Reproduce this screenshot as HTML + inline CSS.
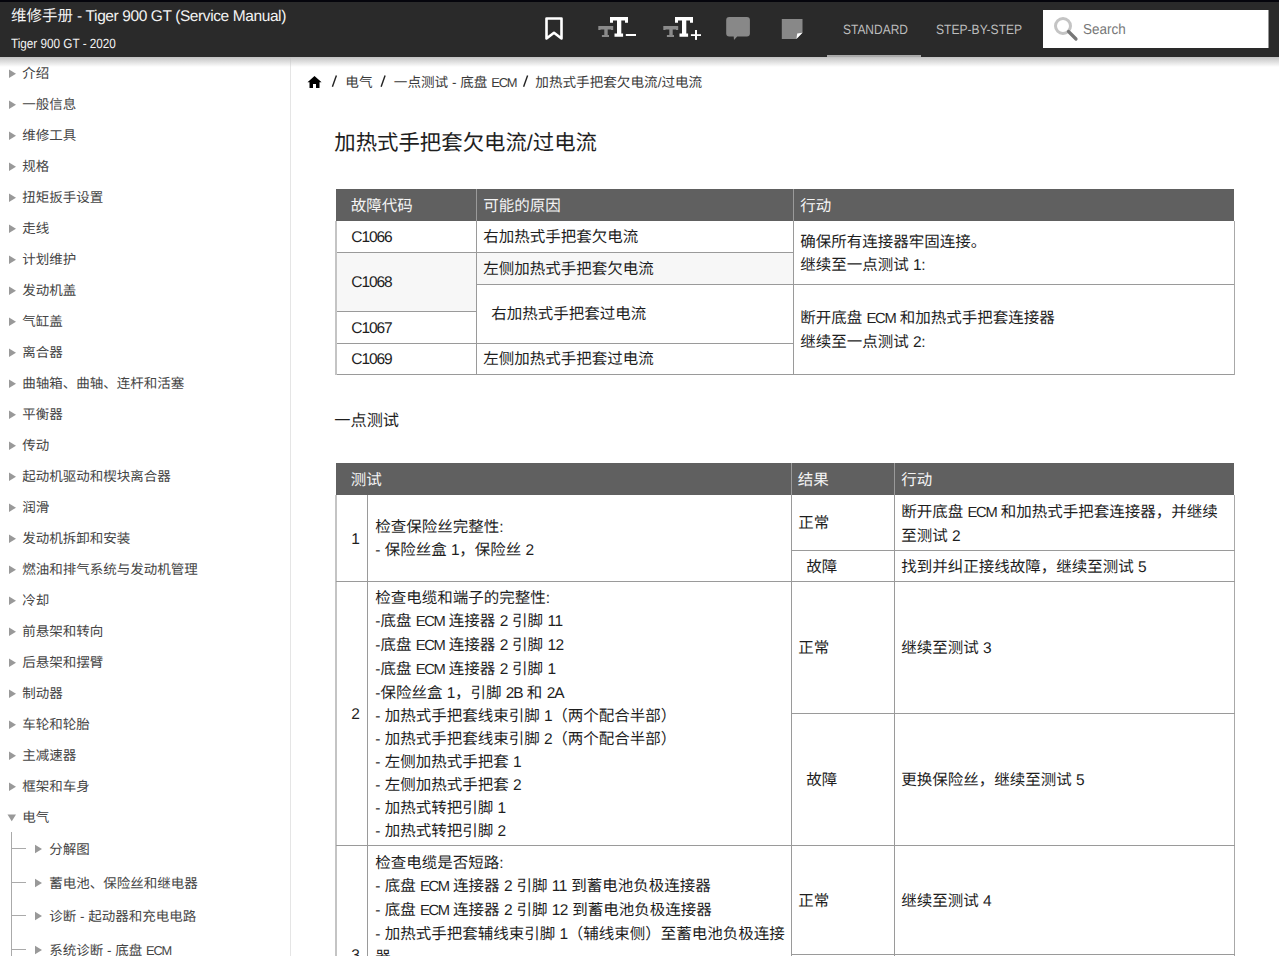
<!DOCTYPE html>
<html lang="zh-CN"><head><meta charset="utf-8">
<style>
*{margin:0;padding:0;box-sizing:border-box}
html,body{width:1279px;height:956px;overflow:hidden;background:#fff}
body{font-family:"Liberation Sans",sans-serif;color:#222;position:relative;text-rendering:geometricPrecision}
.t{position:absolute;white-space:nowrap}
.ov{position:absolute;left:0;top:0}
.la{font-size:0.95em;letter-spacing:-0.09em}
.di{letter-spacing:-0.03em}
.ld{letter-spacing:-0.07em}
#hdr{position:absolute;left:0;top:0;width:1279px;height:57px;background:#2a2a2a;border-top:2px solid #05050c;z-index:5}
#shadow{position:absolute;left:0;top:57px;width:1279px;height:10px;background:linear-gradient(#c2c2c2,rgba(255,255,255,0));z-index:4}
#side{position:absolute;left:0;top:57px;width:291px;height:899px;border-right:1px solid #e5e5e5}
.ht{position:absolute;color:#f2f2f2;white-space:nowrap}
#hdr svg{position:absolute;left:0;top:-2px}
</style></head><body>
<div id="side"></div>
<svg class="ov" width="1279" height="956" viewBox="0 0 1279 956"><polygon points="9,69.4 16,73.65 9,77.9" fill="#999"/><polygon points="9,100.4 16,104.65 9,108.9" fill="#999"/><polygon points="9,131.4 16,135.65 9,139.9" fill="#999"/><polygon points="9,162.4 16,166.65 9,170.9" fill="#999"/><polygon points="9,193.4 16,197.65 9,201.9" fill="#999"/><polygon points="9,224.4 16,228.65 9,232.9" fill="#999"/><polygon points="9,255.4 16,259.65 9,263.9" fill="#999"/><polygon points="9,286.4 16,290.65 9,294.9" fill="#999"/><polygon points="9,317.4 16,321.65 9,325.9" fill="#999"/><polygon points="9,348.4 16,352.65 9,356.9" fill="#999"/><polygon points="9,379.4 16,383.65 9,387.9" fill="#999"/><polygon points="9,410.4 16,414.65 9,418.9" fill="#999"/><polygon points="9,441.4 16,445.65 9,449.9" fill="#999"/><polygon points="9,472.4 16,476.65 9,480.9" fill="#999"/><polygon points="9,503.4 16,507.65 9,511.9" fill="#999"/><polygon points="9,534.4 16,538.65 9,542.9" fill="#999"/><polygon points="9,565.4 16,569.65 9,573.9" fill="#999"/><polygon points="9,596.4 16,600.65 9,604.9" fill="#999"/><polygon points="9,627.4 16,631.65 9,635.9" fill="#999"/><polygon points="9,658.4 16,662.65 9,666.9" fill="#999"/><polygon points="9,689.4 16,693.65 9,697.9" fill="#999"/><polygon points="9,720.4 16,724.65 9,728.9" fill="#999"/><polygon points="9,751.4 16,755.65 9,759.9" fill="#999"/><polygon points="9,782.4 16,786.65 9,790.9" fill="#999"/><polygon points="7.5,814.5 16,814.5 11.75,821.2" fill="#999"/><rect x="11" y="832" width="1" height="130" fill="#aaa"/><rect x="11" y="848.0" width="15" height="1" fill="#aaa"/><polygon points="35,844.8 42,849.05 35,853.3" fill="#999"/><rect x="11" y="882.0" width="15" height="1" fill="#aaa"/><polygon points="35,878.8 42,883.05 35,887.3" fill="#999"/><rect x="11" y="915.0" width="15" height="1" fill="#aaa"/><polygon points="35,911.8 42,916.05 35,920.3" fill="#999"/><rect x="11" y="949.0" width="15" height="1" fill="#aaa"/><polygon points="35,945.8 42,950.05 35,954.3" fill="#999"/><line x1="332.40000000000003" y1="86.8" x2="336.40000000000003" y2="75.4" stroke="#222" stroke-width="1.4"/><line x1="381.1" y1="86.8" x2="385.1" y2="75.4" stroke="#222" stroke-width="1.4"/><line x1="523.6" y1="86.8" x2="527.6" y2="75.4" stroke="#222" stroke-width="1.4"/><path d="M314.5,76 L307.5,82.3 H309.5 V88 H313 V84 H316 V88 H319.5 V82.3 H321.6 Z" fill="#000"/><rect x="336" y="189" width="898" height="32" fill="#606060"/><rect x="336" y="252" width="140" height="59" fill="#f7f7f7"/><rect x="476" y="252" width="317" height="32" fill="#f7f7f7"/><rect x="336" y="252" width="899" height="1" fill="#9a9a9a"/><rect x="336" y="374" width="899" height="1" fill="#9a9a9a"/><rect x="476" y="284" width="759" height="1" fill="#9a9a9a"/><rect x="336" y="311" width="141" height="1" fill="#9a9a9a"/><rect x="336" y="343" width="458" height="1" fill="#9a9a9a"/><rect x="335" y="221" width="2" height="154" fill="#c4c4c4"/><rect x="476" y="189" width="1" height="186" fill="#9a9a9a"/><rect x="793" y="189" width="1" height="186" fill="#9a9a9a"/><rect x="1234" y="221" width="1" height="154" fill="#a8a8a8"/><rect x="794" y="252" width="440" height="1" fill="#fff"/><rect x="336" y="463" width="898" height="32" fill="#606060"/><rect x="335" y="495" width="2" height="465" fill="#c4c4c4"/><rect x="367" y="495" width="1" height="466" fill="#9a9a9a"/><rect x="791" y="463" width="1" height="498" fill="#9a9a9a"/><rect x="894" y="463" width="1" height="498" fill="#9a9a9a"/><rect x="1234" y="495" width="1" height="466" fill="#a8a8a8"/><rect x="791" y="550" width="444" height="1" fill="#9a9a9a"/><rect x="336" y="581" width="899" height="1" fill="#9a9a9a"/><rect x="791" y="713" width="444" height="1" fill="#9a9a9a"/><rect x="336" y="845" width="899" height="1" fill="#9a9a9a"/><rect x="791" y="954" width="444" height="1" fill="#9a9a9a"/></svg>
<div class="t " style="left:22.30px;top:62.50px;font-size:13.5px;line-height:22px;color:#454545;">介绍</div>
<div class="t " style="left:22.30px;top:93.50px;font-size:13.5px;line-height:22px;color:#454545;">一般信息</div>
<div class="t " style="left:22.30px;top:124.50px;font-size:13.5px;line-height:22px;color:#454545;">维修工具</div>
<div class="t " style="left:22.30px;top:155.50px;font-size:13.5px;line-height:22px;color:#454545;">规格</div>
<div class="t " style="left:22.30px;top:186.50px;font-size:13.5px;line-height:22px;color:#454545;">扭矩扳手设置</div>
<div class="t " style="left:22.30px;top:217.50px;font-size:13.5px;line-height:22px;color:#454545;">走线</div>
<div class="t " style="left:22.30px;top:248.50px;font-size:13.5px;line-height:22px;color:#454545;">计划维护</div>
<div class="t " style="left:22.30px;top:279.50px;font-size:13.5px;line-height:22px;color:#454545;">发动机盖</div>
<div class="t " style="left:22.30px;top:310.50px;font-size:13.5px;line-height:22px;color:#454545;">气缸盖</div>
<div class="t " style="left:22.30px;top:341.50px;font-size:13.5px;line-height:22px;color:#454545;">离合器</div>
<div class="t " style="left:22.30px;top:372.50px;font-size:13.5px;line-height:22px;color:#454545;">曲轴箱、曲轴、连杆和活塞</div>
<div class="t " style="left:22.30px;top:403.50px;font-size:13.5px;line-height:22px;color:#454545;">平衡器</div>
<div class="t " style="left:22.30px;top:434.50px;font-size:13.5px;line-height:22px;color:#454545;">传动</div>
<div class="t " style="left:22.30px;top:465.50px;font-size:13.5px;line-height:22px;color:#454545;">起动机驱动和楔块离合器</div>
<div class="t " style="left:22.30px;top:496.50px;font-size:13.5px;line-height:22px;color:#454545;">润滑</div>
<div class="t " style="left:22.30px;top:527.50px;font-size:13.5px;line-height:22px;color:#454545;">发动机拆卸和安装</div>
<div class="t " style="left:22.30px;top:558.50px;font-size:13.5px;line-height:22px;color:#454545;">燃油和排气系统与发动机管理</div>
<div class="t " style="left:22.30px;top:589.50px;font-size:13.5px;line-height:22px;color:#454545;">冷却</div>
<div class="t " style="left:22.30px;top:620.50px;font-size:13.5px;line-height:22px;color:#454545;">前悬架和转向</div>
<div class="t " style="left:22.30px;top:651.50px;font-size:13.5px;line-height:22px;color:#454545;">后悬架和摆臂</div>
<div class="t " style="left:22.30px;top:682.50px;font-size:13.5px;line-height:22px;color:#454545;">制动器</div>
<div class="t " style="left:22.30px;top:713.50px;font-size:13.5px;line-height:22px;color:#454545;">车轮和轮胎</div>
<div class="t " style="left:22.30px;top:744.50px;font-size:13.5px;line-height:22px;color:#454545;">主减速器</div>
<div class="t " style="left:22.30px;top:775.50px;font-size:13.5px;line-height:22px;color:#454545;">框架和车身</div>
<div class="t " style="left:22.30px;top:806.50px;font-size:13.5px;line-height:22px;color:#454545;">电气</div>
<div class="t " style="left:49.30px;top:838.50px;font-size:13.5px;line-height:22px;color:#454545;">分解图</div>
<div class="t " style="left:49.30px;top:872.50px;font-size:13.5px;line-height:22px;color:#454545;">蓄电池、保险丝和继电器</div>
<div class="t " style="left:49.30px;top:905.50px;font-size:13.5px;line-height:22px;color:#454545;">诊断 - 起动器和充电电路</div>
<div class="t " style="left:49.30px;top:939.50px;font-size:13.5px;line-height:22px;color:#454545;">系统诊断 - 底盘 <span class="la">ECM</span></div>
<div class="t " style="left:345.30px;top:74.00px;font-size:13.6px;line-height:18px;color:#3a3a3a;">电气</div>
<div class="t " style="left:393.80px;top:74.00px;font-size:13.6px;line-height:18px;color:#3a3a3a;">一点测试 - 底盘 <span class="la">ECM</span></div>
<div class="t " style="left:535.30px;top:74.00px;font-size:13.6px;line-height:18px;color:#3a3a3a;">加热式手把套欠电流/过电流</div>
<div class="t " style="left:334.30px;top:129.20px;font-size:21.4px;line-height:28px;color:#1e1e1e;">加热式手把套欠电流/过电流</div>
<div class="t " style="left:350.80px;top:194.50px;font-size:15.5px;line-height:23px;color:#f4f4f4;">故障代码</div>
<div class="t " style="left:483.30px;top:194.50px;font-size:15.5px;line-height:23px;color:#f4f4f4;">可能的原因</div>
<div class="t " style="left:800.30px;top:194.50px;font-size:15.5px;line-height:23px;color:#f4f4f4;">行动</div>
<div class="t " style="left:351.30px;top:226.00px;font-size:15.5px;line-height:23px;color:#1e1e1e;"><span class="ld">C1066</span></div>
<div class="t " style="left:351.30px;top:271.00px;font-size:15.5px;line-height:23px;color:#1e1e1e;"><span class="ld">C1068</span></div>
<div class="t " style="left:351.30px;top:316.50px;font-size:15.5px;line-height:23px;color:#1e1e1e;"><span class="ld">C1067</span></div>
<div class="t " style="left:351.30px;top:348.00px;font-size:15.5px;line-height:23px;color:#1e1e1e;"><span class="ld">C1069</span></div>
<div class="t " style="left:483.30px;top:226.00px;font-size:15.5px;line-height:23px;color:#1e1e1e;">右加热式手把套欠电流</div>
<div class="t " style="left:483.30px;top:257.50px;font-size:15.5px;line-height:23px;color:#1e1e1e;">左侧加热式手把套欠电流</div>
<div class="t " style="left:491.30px;top:303.00px;font-size:15.5px;line-height:23px;color:#1e1e1e;">右加热式手把套过电流</div>
<div class="t " style="left:483.30px;top:348.00px;font-size:15.5px;line-height:23px;color:#1e1e1e;">左侧加热式手把套过电流</div>
<div class="t " style="left:800.30px;top:230.50px;font-size:15.5px;line-height:23px;color:#1e1e1e;">确保所有连接器牢固连接。<br>继续至一点测试 <span class="di">1</span>:</div>
<div class="t " style="left:800.30px;top:307.00px;font-size:15.5px;line-height:23px;color:#1e1e1e;">断开底盘 <span class="la">ECM</span> 和加热式手把套连接器<br>继续至一点测试 <span class="di">2</span>:</div>
<div class="t " style="left:334.30px;top:409.90px;font-size:16.2px;line-height:23px;color:#1e1e1e;">一点测试</div>
<div class="t " style="left:350.80px;top:468.50px;font-size:15.5px;line-height:23px;color:#f4f4f4;">测试</div>
<div class="t " style="left:797.80px;top:468.50px;font-size:15.5px;line-height:23px;color:#f4f4f4;">结果</div>
<div class="t " style="left:901.30px;top:468.50px;font-size:15.5px;line-height:23px;color:#f4f4f4;">行动</div>
<div class="t " style="left:351.30px;top:527.50px;font-size:15.5px;line-height:23px;color:#1e1e1e;"><span class="di">1</span></div>
<div class="t " style="left:375.30px;top:516.00px;font-size:15.5px;line-height:23px;color:#1e1e1e;">检查保险丝完整性:<br>- 保险丝盒 <span class="di">1</span>，保险丝 <span class="di">2</span></div>
<div class="t " style="left:798.30px;top:512.00px;font-size:15.5px;line-height:23px;color:#1e1e1e;">正常</div>
<div class="t " style="left:901.30px;top:500.50px;font-size:15.5px;line-height:23px;color:#1e1e1e;">断开底盘 <span class="la">ECM</span> 和加热式手把套连接器，并继续<br>至测试 <span class="di">2</span></div>
<div class="t " style="left:806.30px;top:555.50px;font-size:15.5px;line-height:23px;color:#1e1e1e;">故障</div>
<div class="t " style="left:901.30px;top:555.50px;font-size:15.5px;line-height:23px;color:#1e1e1e;">找到并纠正接线故障，继续至测试 <span class="di">5</span></div>
<div class="t " style="left:351.30px;top:702.50px;font-size:15.5px;line-height:23px;color:#1e1e1e;"><span class="di">2</span></div>
<div class="t " style="left:375.30px;top:587.20px;font-size:15.5px;line-height:23px;color:#1e1e1e;">检查电缆和端子的完整性:<br>-底盘 <span class="la">ECM</span> 连接器 <span class="di">2</span> 引脚 <span class="di">11</span><br>-底盘 <span class="la">ECM</span> 连接器 <span class="di">2</span> 引脚 <span class="di">12</span><br>-底盘 <span class="la">ECM</span> 连接器 <span class="di">2</span> 引脚 <span class="di">1</span><br>-保险丝盒 <span class="di">1</span>，引脚 <span class="ld">2B</span> 和 <span class="ld">2A</span><br>- 加热式手把套线束引脚 <span class="di">1</span>（两个配合半部）<br>- 加热式手把套线束引脚 <span class="di">2</span>（两个配合半部）<br>- 左侧加热式手把套 <span class="di">1</span><br>- 左侧加热式手把套 <span class="di">2</span><br>- 加热式转把引脚 <span class="di">1</span><br>- 加热式转把引脚 <span class="di">2</span></div>
<div class="t " style="left:798.30px;top:637.00px;font-size:15.5px;line-height:23px;color:#1e1e1e;">正常</div>
<div class="t " style="left:901.30px;top:637.00px;font-size:15.5px;line-height:23px;color:#1e1e1e;">继续至测试 <span class="di">3</span></div>
<div class="t " style="left:806.30px;top:769.00px;font-size:15.5px;line-height:23px;color:#1e1e1e;">故障</div>
<div class="t " style="left:901.30px;top:769.00px;font-size:15.5px;line-height:23px;color:#1e1e1e;">更换保险丝，继续至测试 <span class="di">5</span></div>
<div class="t " style="left:375.30px;top:852.00px;font-size:15.5px;line-height:23px;color:#1e1e1e;">检查电缆是否短路:<br>- 底盘 <span class="la">ECM</span> 连接器 <span class="di">2</span> 引脚 <span class="di">11</span> 到蓄电池负极连接器<br>- 底盘 <span class="la">ECM</span> 连接器 <span class="di">2</span> 引脚 <span class="di">12</span> 到蓄电池负极连接器<br>- 加热式手把套辅线束引脚 <span class="di">1</span>（辅线束侧）至蓄电池负极连接<br>器<br>- 加热式手把套辅线束引脚 <span class="di">2</span>（辅线束侧）至蓄电池负极连接<br>器<br>- 加热式转把引脚 <span class="di">1</span> 到蓄电池负极连接器</div>
<div class="t " style="left:351.30px;top:943.50px;font-size:15.5px;line-height:23px;color:#1e1e1e;"><span class="di">3</span></div>
<div class="t " style="left:798.30px;top:889.50px;font-size:15.5px;line-height:23px;color:#1e1e1e;">正常</div>
<div class="t " style="left:901.30px;top:889.50px;font-size:15.5px;line-height:23px;color:#1e1e1e;">继续至测试 <span class="di">4</span></div>
<div id="shadow"></div>
<div id="hdr">
  <div class="ht" style="left:11px;top:5px;font-size:15.5px;line-height:20px">维修手册<span style="letter-spacing:-0.4px"> - Tiger 900 GT (Service Manual)</span></div>
  <div class="ht" style="left:11px;top:32.5px;font-size:13.4px;line-height:18px;transform:scaleX(0.875);transform-origin:0 0">Tiger 900 GT - 2020</div>
  <svg width="1279" height="57" viewBox="0 0 1279 57">
    <path d="M546.5,18.5 H561.5 V38.5 L554,32.8 L546.5,38.5 Z" fill="none" stroke="#fff" stroke-width="2.6" stroke-linejoin="round"/>
    <path d="M598.3,26 H613.2 V30 H611 V29.4 H607.7 V35 H609 V37 H601.9 V35 H604.3 V29.4 H600.5 V30 H598.3 Z" fill="#8a8a8a"/>
    <path d="M610,17 H628 V22.8 H625 V20.6 H621.3 V33.6 H623.1 V36.8 H614.5 V33.6 H617 V20.6 H613 V22.8 H610 Z" fill="#fff"/>
    <rect x="625.8" y="34" width="10.2" height="2" fill="#fff"/>
    <path d="M663.3,26 H678.2 V30 H676 V29.4 H672.7 V35 H674 V37 H666.9 V35 H669.3 V29.4 H665.5 V30 H663.3 Z" fill="#8a8a8a"/>
    <path d="M675,17 H693 V22.8 H690 V20.6 H686.3 V33.6 H688.1 V36.8 H679.5 V33.6 H682 V20.6 H678 V22.8 H675 Z" fill="#fff"/>
    <rect x="690.9" y="34.2" width="10.1" height="1.8" fill="#fff"/>
    <rect x="695" y="30" width="2" height="9.9" fill="#fff"/>
    <path d="M729.2,16.9 H746.9 Q749.9,16.9 749.9,19.9 V33.6 Q749.9,36.6 746.9,36.6 H737.2 L734,40.1 L733.7,36.6 H729.2 Q726.2,36.6 726.2,33.6 V19.9 Q726.2,16.9 729.2,16.9 Z" fill="#888"/>
    <path d="M781.8,19 H802.5 V32.8 L796.4,39 H781.8 Z" fill="#888"/>
    <path d="M796.4,39 L797.2,33.4 L802.5,32.8 Z" fill="#fff"/>
    <rect x="827" y="55" width="94" height="2" fill="#a9a9a9"/>
    <rect x="1043" y="10" width="225.5" height="38" fill="#fff"/>
    <circle cx="1063" cy="26" r="7.5" fill="none" stroke="#c4c4c4" stroke-width="3"/>
    <path d="M1068.5,31.5 L1076,39" stroke="#777" stroke-width="3.2" stroke-linecap="round"/>
  </svg>
  <div class="ht" style="left:842.5px;top:17.5px;font-size:13.5px;line-height:20px;color:#bdbdbd;transform:scaleX(0.886);transform-origin:0 0">STANDARD</div>
  <div class="ht" style="left:935.5px;top:17.5px;font-size:13.5px;line-height:20px;color:#bdbdbd;transform:scaleX(0.895);transform-origin:0 0">STEP-BY-STEP</div>
  <div class="ht" style="left:1083px;top:18px;font-size:14.5px;line-height:20px;color:#777;transform:scaleX(0.93);transform-origin:0 0">Search</div>
</div>
</body></html>
